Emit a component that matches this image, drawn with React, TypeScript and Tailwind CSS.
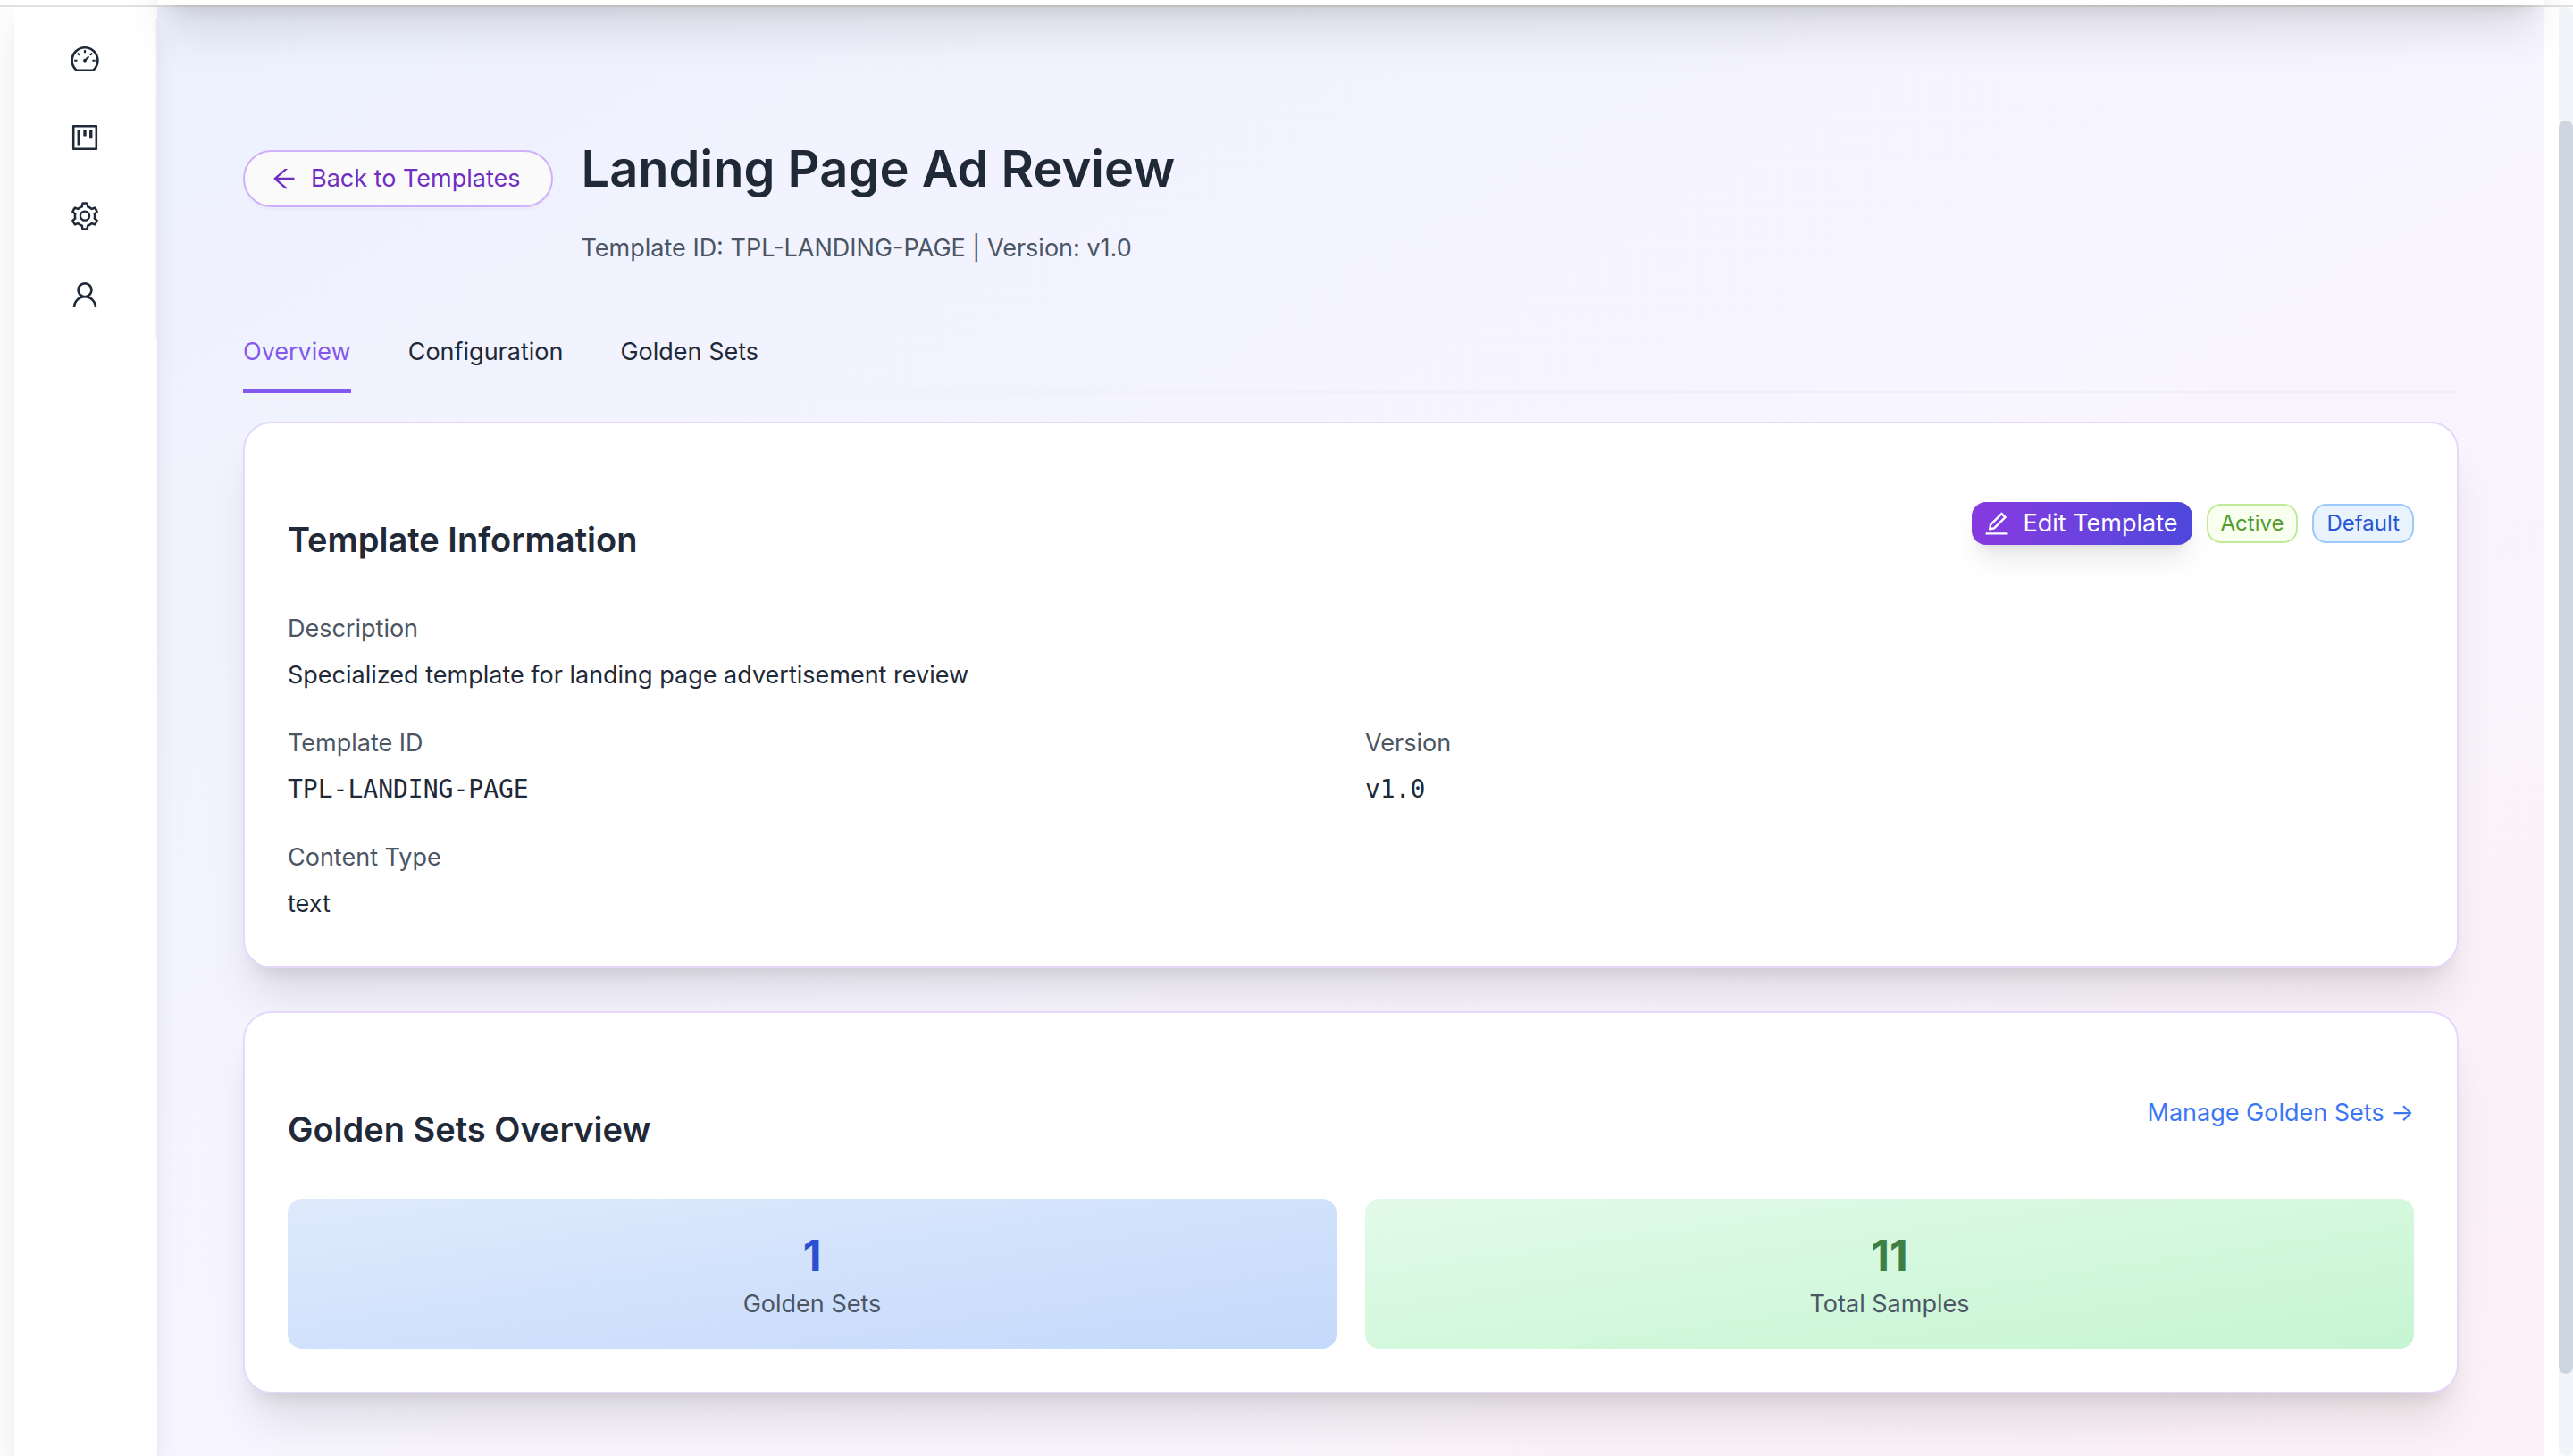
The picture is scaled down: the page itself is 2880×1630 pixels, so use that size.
import type { ReactNode } from "react";
import {
  AiOutlineArrowLeft,
  AiOutlineDashboard,
  AiOutlineEdit,
  AiOutlineProject,
  AiOutlineSetting,
  AiOutlineUser,
} from "react-icons/ai";

const navItems = [
  { label: "Dashboard", Icon: AiOutlineDashboard },
  { label: "Projects", Icon: AiOutlineProject },
  { label: "Settings", Icon: AiOutlineSetting },
  { label: "Profile", Icon: AiOutlineUser },
];

const tabs = ["Overview", "Configuration", "Golden Sets"];

function Sidebar() {
  return (
    <aside className="relative ml-4 w-40 shrink-0 bg-white shadow-[0_20px_30px_-6px_rgba(0,0,0,0.1),0_8px_12px_-8px_rgba(0,0,0,0.1)]">
      <nav aria-label="Main" className="mt-3 flex flex-col gap-2 border-r-2 border-[#f3f3f4] pt-[6px] pb-[10px]">
        {navItems.map(({ label, Icon }) => (
          <a key={label} href="#" aria-label={label} className="flex h-20 items-center justify-center">
            <Icon className="size-9" />
          </a>
        ))}
      </nav>
    </aside>
  );
}

function Card({ title, action, children }: { title: string; action: ReactNode; children: ReactNode }) {
  return (
    <section className="rounded-[32px] border-2 border-[#e6d7fd] bg-white p-12 shadow-[0_40px_50px_-10px_rgba(0,0,0,0.1),0_16px_20px_-12px_rgba(0,0,0,0.1)]">
      <header className="mb-8 flex items-center justify-between">
        <h2 className="mt-[54px] mb-[18px] text-[38px] leading-[56px] font-semibold">{title}</h2>
        {action}
      </header>
      {children}
    </section>
  );
}

function Field({ label, mono, children }: { label: string; mono?: boolean; children: ReactNode }) {
  return (
    <div>
      <dt className="mb-2 text-[#4b5563]">{label}</dt>
      <dd className={mono ? "font-['DejaVu_Sans_Mono',monospace] text-[28px]" : ""}>{children}</dd>
    </div>
  );
}

export default function App() {
  return (
    <div className="flex min-h-screen flex-col bg-white font-['Inter',sans-serif] text-[27px] leading-[44px] text-[#1f2937]">
      <div className="relative z-10 h-2 border-b-2 border-[#e0e2e0] bg-white">
        <div className="pointer-events-none absolute right-8 bottom-0 left-44 h-32 shadow-[0_40px_50px_-10px_rgba(0,0,0,0.1),0_16px_20px_-12px_rgba(0,0,0,0.1)]" />
      </div>
      <div className="flex grow bg-[#fcfcfc]">
        <Sidebar />
        <main className="grow bg-linear-to-br from-[#edf1fe] via-[#f7f5ff] to-[#fcf1f6] px-24 pt-[140px] pb-[60px]">
          <header className="flex items-start gap-8">
            <button
              type="button"
              className="mt-5 flex h-16 items-center gap-[14px] rounded-full border-2 border-[#d0b0fa] bg-[#fafafa] pr-[34px] pl-7 text-[#6f2dc4] shadow-[0_4px_0_rgba(0,0,0,0.02)]"
            >
              <AiOutlineArrowLeft className="size-8" />
              Back to Templates
            </button>
            <div>
              <h1 className="text-[56px] leading-[82px] font-semibold">Landing Page Ad Review</h1>
              <p className="mt-[26px] text-[#4b5563]">Template ID: TPL-LANDING-PAGE | Version: v1.0</p>
            </div>
          </header>

          <div role="tablist" className="mt-12 mb-8 flex gap-16 border-b-2 border-[#f1f0f4]">
            {tabs.map((tab, index) => (
              <button
                key={tab}
                type="button"
                role="tab"
                aria-selected={index === 0}
                className={
                  index === 0
                    ? "-mb-[2px] border-b-4 border-[#8259ec] pt-6 pb-5 text-[#8259ec]"
                    : "pt-6 pb-[22px]"
                }
              >
                {tab}
              </button>
            ))}
          </div>

          <div className="flex flex-col gap-12">
            <Card
              title="Template Information"
              action={
                <div className="flex items-center gap-4">
                  <button
                    type="button"
                    className="flex h-12 items-center gap-[14px] rounded-2xl bg-linear-to-r from-[#8739e0] to-[#4d47dc] pr-4 pl-3 text-white shadow-[0_20px_30px_-6px_rgba(0,0,0,0.1),0_8px_12px_-8px_rgba(0,0,0,0.1)]"
                  >
                    <AiOutlineEdit className="size-8" />
                    Edit Template
                  </button>
                  <span className="rounded-2xl border-2 border-[#c1ea99] bg-[#f8ffee] px-[14px] text-[24px] leading-[40px] text-[#559b31]">
                    Active
                  </span>
                  <span className="rounded-2xl border-2 border-[#9bc9fc] bg-[#e9f3fe] px-[14px] text-[24px] leading-[40px] text-[#2857d0]">
                    Default
                  </span>
                </div>
              }
            >
              <dl className="grid grid-cols-2 gap-8">
                <div className="col-span-2">
                  <Field label="Description">Specialized template for landing page advertisement review</Field>
                </div>
                <Field label="Template ID" mono>
                  TPL-LANDING-PAGE
                </Field>
                <Field label="Version" mono>
                  v1.0
                </Field>
                <Field label="Content Type">text</Field>
              </dl>
            </Card>

            <Card
              title="Golden Sets Overview"
              action={
                <a href="#" className="text-[#3b77f5]">
                  Manage Golden Sets →
                </a>
              }
            >
              <div className="grid grid-cols-2 gap-8 text-center text-[#4b5563]">
                <div className="rounded-2xl bg-linear-to-br from-[#dfeafc] to-[#c4d9fb] px-8 pt-8 pb-7">
                  <div className="text-[48px] leading-[64px] font-bold text-[#2a4fd0]">1</div>
                  <div>Golden Sets</div>
                </div>
                <div className="rounded-2xl bg-linear-to-br from-[#e2fbe8] to-[#c6f5d3] px-8 pt-8 pb-7">
                  <div className="text-[48px] leading-[64px] font-bold text-[#3d7f45]">11</div>
                  <div>Total Samples</div>
                </div>
              </div>
            </Card>
          </div>
        </main>
        <div className="w-4 shrink-0 bg-white" />
        <div className="flex w-4 shrink-0 flex-col rounded-full bg-slate-100 pt-[127px] pb-[92px]">
          <div className="grow rounded-full bg-[#cdd5e1]" />
        </div>
      </div>
    </div>
  );
}
